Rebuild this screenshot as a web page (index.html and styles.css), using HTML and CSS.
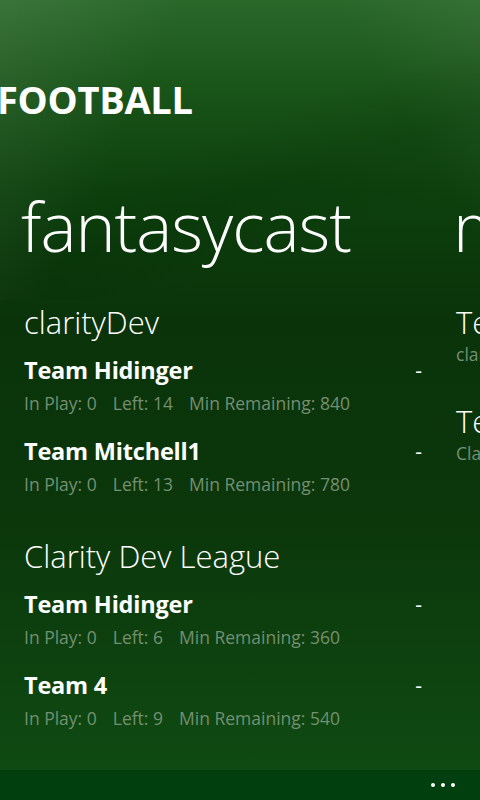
FILE: index.html
```html
<!DOCTYPE html>
<html lang="en">
<head>
    <meta charset="UTF-8">
    <meta name="viewport" content="width=device-width, initial-scale=1.0">
    <title>Football - fantasycast</title>
    <link rel="stylesheet" href="styles.css">
</head>
<body>
    <div class="screen">
        <div class="rays"></div>
        <div class="app-title">FOOTBALL</div>
        <div class="panorama">
            <div class="panel">
                <h1 class="panel-title">fantasycast</h1>
                <div class="league">
                    <div class="league-name">clarityDev</div>
                    <div class="team">
                        <div class="team-row">
                            <span class="team-name">Team Hidinger</span>
                            <span class="team-score">-</span>
                        </div>
                        <div class="team-stats">
                            <span>In Play: 0</span><span>Left: 14</span><span>Min Remaining: 840</span>
                        </div>
                    </div>
                    <div class="team">
                        <div class="team-row">
                            <span class="team-name">Team Mitchell1</span>
                            <span class="team-score">-</span>
                        </div>
                        <div class="team-stats">
                            <span>In Play: 0</span><span>Left: 13</span><span>Min Remaining: 780</span>
                        </div>
                    </div>
                </div>
                <div class="league">
                    <div class="league-name">Clarity Dev League</div>
                    <div class="team">
                        <div class="team-row">
                            <span class="team-name">Team Hidinger</span>
                            <span class="team-score">-</span>
                        </div>
                        <div class="team-stats">
                            <span>In Play: 0</span><span>Left: 6</span><span>Min Remaining: 360</span>
                        </div>
                    </div>
                    <div class="team">
                        <div class="team-row">
                            <span class="team-name">Team 4</span>
                            <span class="team-score">-</span>
                        </div>
                        <div class="team-stats">
                            <span>In Play: 0</span><span>Left: 9</span><span>Min Remaining: 540</span>
                        </div>
                    </div>
                </div>
            </div>
            <div class="panel">
                <h1 class="panel-title">my teams</h1>
                <div class="my-team">
                    <div class="my-team-name">Team Hidinger</div>
                    <div class="my-team-league">clarityDev</div>
                </div>
                <div class="my-team">
                    <div class="my-team-name">Team Hidinger</div>
                    <div class="my-team-league">Clarity Dev League</div>
                </div>
            </div>
        </div>
        <div class="app-bar">
            <span class="dot"></span><span class="dot"></span><span class="dot"></span>
        </div>
    </div>
</body>
</html>
```

FILE: styles.css
```css
html, body {
    margin: 0;
    padding: 0;
}
body {
    font-family: "Open Sans", "Noto Sans", sans-serif;
    color: #fff;
    background: #0a320a;
}
.screen {
    position: relative;
    width: 480px;
    height: 800px;
    overflow: hidden;
    display: flex;
    flex-direction: column;
    background: linear-gradient(
        to bottom,
        #2a682a 0,
        #195419 90px,
        #0d400d 190px,
        #0a330a 320px,
        #0b370b 520px,
        #0f4a12 770px
    );
}
/* faint light beams over the header */
.rays {
    position: absolute;
    left: 0;
    top: 0;
    width: 480px;
    height: 300px;
    background:
        linear-gradient(115deg, rgba(255, 255, 255, 0.08) 0, rgba(255, 255, 255, 0) 30%),
        linear-gradient(240deg, rgba(255, 255, 255, 0.05) 0, rgba(255, 255, 255, 0) 22%),
        linear-gradient(160deg, rgba(0, 0, 0, 0) 45%, rgba(0, 40, 0, 0.15) 60%, rgba(0, 0, 0, 0) 75%);
}
.app-title {
    position: relative;
    margin: 74px 0 0 -3px;
    font-size: 38px;
    font-weight: 700;
    line-height: 50px;
    letter-spacing: -0.3px;
    white-space: nowrap;
}
.panorama {
    position: relative;
    flex: 1;
    display: flex;
}
.panel {
    flex: 0 0 408px;
    width: 408px;
    padding-left: 24px;
}
.panel-title {
    margin: 54px 0 29px -3px;
    font-size: 68px;
    font-weight: 300;
    line-height: 96px;
    white-space: nowrap;
    letter-spacing: -1px;
}
.league + .league {
    margin-top: 30px;
}
.league-name {
    font-size: 31px;
    font-weight: 300;
    line-height: 38px;
    margin-bottom: 4px;
    white-space: nowrap;
}
.team {
    padding-top: 10px;
    padding-bottom: 10px;
}
.team-row {
    display: flex;
    justify-content: space-between;
    width: 398px;
    line-height: 30px;
}
.team-name {
    font-size: 23.5px;
    font-weight: 700;
    letter-spacing: -0.2px;
}
.team-score {
    font-size: 21px;
}
.team-stats {
    display: flex;
    gap: 16px;
    margin-top: 5px;
    font-size: 17.5px;
    color: #748f72;
    line-height: 26px;
    white-space: nowrap;
}
.my-team {
    margin-bottom: 37px;
    white-space: nowrap;
}
.my-team-name {
    font-size: 31px;
    font-weight: 300;
    line-height: 38px;
}
.my-team-league {
    margin-top: 2px;
    font-size: 17.5px;
    color: #748f72;
    line-height: 22px;
}
.app-bar {
    position: relative;
    height: 30px;
    background: #023f0e;
    display: flex;
    justify-content: flex-end;
    align-items: center;
    gap: 6px;
    padding-right: 25px;
}
.dot {
    width: 4px;
    height: 4px;
    border-radius: 50%;
    background: #fff;
}
```
